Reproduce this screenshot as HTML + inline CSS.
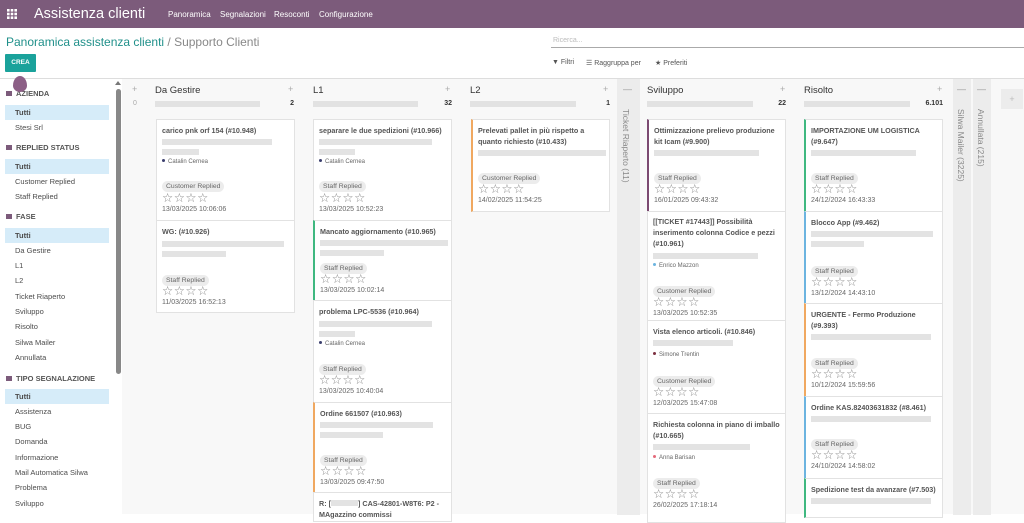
<!DOCTYPE html>
<html><head><meta charset="utf-8"><style>
*{margin:0;padding:0;box-sizing:border-box}
body{width:1024px;height:514px;overflow:hidden;font-family:"Liberation Sans",sans-serif;background:#fff;position:relative;color:#4c4c4c}
.nav{position:absolute;left:0;top:0;width:1024px;height:28px;background:#7c5b7b;color:#fff}
.nav .brand{position:absolute;left:34px;top:6px;font-size:14.5px}
.nav .m{position:absolute;top:10px;font-size:8px}
.bc{position:absolute;left:6px;top:35px;font-size:12px;color:#888}
.bc span{color:#20908a}
.crea{position:absolute;left:5px;top:54px;width:31px;height:18px;background:#1aa29b;color:#fff;font-size:6.5px;font-weight:bold;text-align:center;line-height:18px;border-radius:1px}
.drop{position:absolute;left:13px;top:76px;width:14px;height:16px;background:#8c5f86;border-radius:50% 50% 50% 50%/60% 60% 40% 40%}
.search{position:absolute;left:551px;top:47px;width:473px;border-bottom:1px solid #aaa;height:1px}
.sl{position:absolute;left:553px;top:37px;font-size:7px;color:#bbb}
.fb{position:absolute;top:59px;font-size:7px;color:#555}
.main{position:absolute;left:0;top:78px;width:1024px;height:436px;border-top:1px solid #ddd;background:#f8f8f8}
.side{position:absolute;left:0;top:0;width:122px;height:436px;background:#fff}
.side div{position:absolute;left:15px;font-size:7.5px;color:#4c4c4c;width:94px;height:15px;line-height:15px}
.side .h{left:6px;font-weight:bold;color:#555;font-size:7.5px}
.side .h:before{content:"";display:inline-block;width:6px;height:5px;background:#7c5b7b;margin-right:4px;vertical-align:0}
.side .a{background:#d6ecf9;font-weight:bold;left:5px;width:104px;padding-left:10px}
.sb{position:absolute;left:116px;top:10px;width:5px;height:285px;background:#888;border-radius:3px}
.sbt{position:absolute;left:115px;top:2px;width:0;height:0;border-left:3.5px solid transparent;border-right:3.5px solid transparent;border-bottom:4px solid #777}
.ct{position:absolute;font-size:9.5px;color:#333}
.cp{position:absolute;font-size:9px;color:#aaa}
.pb{position:absolute;height:6px;background:#e2e2e2}
.cn{position:absolute;font-size:7px;font-weight:bold;color:#333;text-align:right}
.fold{position:absolute;top:0;height:436px;background:#ececec}
.fold .v{position:absolute;top:30px;left:4px;writing-mode:vertical-rl;font-size:8.5px;color:#888;white-space:nowrap}
.fold .mi{position:absolute;top:5px;left:6px;font-size:9px;color:#999}
.c{position:absolute;background:#fff;border:1px solid #e2e2e2}
.c>*{position:absolute;left:5px}
.t{font-size:7.2px;font-weight:bold;color:#555;line-height:11px;white-space:nowrap}
.b{height:6px;background:#e3e3e3}
.p{font-size:6px;color:#666}
.p i{display:inline-block;width:3px;height:3px;border-radius:50%;background:#3b3f6e;margin-right:3px;vertical-align:1px}
.g{font-size:6.8px;color:#666;background:#ececec;border-radius:6px;padding:0 4px;height:11px;line-height:11px}
.s{font-size:12.5px;color:#888;letter-spacing:0.5px;line-height:11px}
.d{font-size:7px;color:#666}
</style></head><body>
<div class="nav">
<svg style="position:absolute;left:7px;top:9px" width="10" height="10"><g fill="#fff"><rect x="0" y="0" width="2.6" height="2.6"/><rect x="3.7" y="0" width="2.6" height="2.6"/><rect x="7.4" y="0" width="2.6" height="2.6"/><rect x="0" y="3.7" width="2.6" height="2.6"/><rect x="3.7" y="3.7" width="2.6" height="2.6"/><rect x="7.4" y="3.7" width="2.6" height="2.6"/><rect x="0" y="7.4" width="2.6" height="2.6"/><rect x="3.7" y="7.4" width="2.6" height="2.6"/><rect x="7.4" y="7.4" width="2.6" height="2.6"/></g></svg>
<div class="brand">Assistenza clienti</div>
<div class="m" style="left:168px">Panoramica</div>
<div class="m" style="left:220px">Segnalazioni</div>
<div class="m" style="left:274px">Resoconti</div>
<div class="m" style="left:319px">Configurazione</div>
</div>
<div class="bc"><span>Panoramica assistenza clienti</span> / Supporto Clienti</div>
<div class="crea">CREA</div>
<div class="sl">Ricerca...</div>
<div class="search"></div>
<div class="fb" style="left:552px">▼ Filtri</div>
<div class="fb" style="left:586px">☰ Raggruppa per</div>
<div class="fb" style="left:655px">★ Preferiti</div>
<div class="main">
<div class="side">
<div class="h" style="top:7px">AZIENDA</div>
<div class="a" style="top:26px">Tutti</div>
<div style="top:41px">Stesi Srl</div>
<div class="h" style="top:61px">REPLIED STATUS</div>
<div class="a" style="top:80px">Tutti</div>
<div style="top:95px">Customer Replied</div>
<div style="top:110px">Staff Replied</div>
<div class="h" style="top:130px">FASE</div>
<div class="a" style="top:149px">Tutti</div>
<div style="top:164px">Da Gestire</div>
<div style="top:179px">L1</div>
<div style="top:194px">L2</div>
<div style="top:210px">Ticket Riaperto</div>
<div style="top:225px">Sviluppo</div>
<div style="top:240px">Risolto</div>
<div style="top:256px">Silwa Mailer</div>
<div style="top:271px">Annullata</div>
<div class="h" style="top:292px">TIPO SEGNALAZIONE</div>
<div class="a" style="top:310px">Tutti</div>
<div style="top:325px">Assistenza</div>
<div style="top:340px">BUG</div>
<div style="top:355px">Domanda</div>
<div style="top:371px">Informazione</div>
<div style="top:386px">Mail Automatica Silwa</div>
<div style="top:401px">Problema</div>
<div style="top:417px">Sviluppo</div>
</div>
<div class="sbt"></div><div class="sb"></div>

<div class="cp" style="left:132px;top:5px">+</div><div class="cp" style="left:133px;top:21px;font-size:7px">0</div>

<div class="ct" style="left:155px;top:6px">Da Gestire</div><div class="cp" style="left:288px;top:5px">+</div>
<div class="pb" style="left:155px;top:22px;width:105px"></div><div class="cn" style="left:270px;top:21px;width:24px">2</div>

<div class="ct" style="left:313px;top:6px">L1</div><div class="cp" style="left:445px;top:5px">+</div>
<div class="pb" style="left:313px;top:22px;width:105px"></div><div class="cn" style="left:428px;top:21px;width:24px">32</div>

<div class="ct" style="left:470px;top:6px">L2</div><div class="cp" style="left:603px;top:5px">+</div>
<div class="pb" style="left:470px;top:22px;width:106px"></div><div class="cn" style="left:586px;top:21px;width:24px">1</div>

<div class="fold" style="left:617px;width:23px"><div class="mi">—</div><div class="v">Ticket Riaperto (11)</div></div>

<div class="ct" style="left:647px;top:6px">Sviluppo</div><div class="cp" style="left:780px;top:5px">+</div>
<div class="pb" style="left:647px;top:22px;width:106px"></div><div class="cn" style="left:762px;top:21px;width:24px">22</div>

<div class="ct" style="left:804px;top:6px">Risolto</div><div class="cp" style="left:937px;top:5px">+</div>
<div class="pb" style="left:804px;top:22px;width:106px"></div><div class="cn" style="left:910px;top:21px;width:33px">6.101</div>

<div class="fold" style="left:953px;width:18px"><div class="mi" style="left:4px">—</div><div class="v" style="left:3px">Silwa Mailer (3225)</div></div>
<div class="fold" style="left:973px;width:18px"><div class="mi" style="left:4px">—</div><div class="v" style="left:3px">Annullata (215)</div></div>
<div style="position:absolute;left:1001px;top:10px;width:22px;height:20px;background:#ececec;color:#bbb;font-size:9px;text-align:center;line-height:20px">+</div>
</div>

<div class="c" style="left:156px;top:119px;width:139px;height:102px">
<div class="t" style="top:5px">carico pnk orf 154 (#10.948)</div>
<div class="b" style="top:19px;width:110px"></div><div class="b" style="top:29px;width:37px"></div>
<div class="p" style="top:39px"><i></i>Catalin Cernea</div>
<div class="g" style="top:61px">Customer Replied</div>
<div class="s" style="top:73px">☆☆☆☆</div>
<div class="d" style="top:86px">13/03/2025 10:06:06</div></div>
<div class="c" style="left:156px;top:220px;width:139px;height:93px">
<div class="t" style="top:5px">WG: (#10.926)</div>
<div class="b" style="top:20px;width:122px"></div><div class="b" style="top:30px;width:64px"></div>
<div class="g" style="top:54px">Staff Replied</div>
<div class="s" style="top:65px">☆☆☆☆</div>
<div class="d" style="top:78px">11/03/2025 16:52:13</div></div>

<div class="c" style="left:313px;top:119px;width:139px;height:102px">
<div class="t" style="top:5px">separare le due spedizioni (#10.966)</div>
<div class="b" style="top:19px;width:113px"></div><div class="b" style="top:29px;width:36px"></div>
<div class="p" style="top:39px"><i></i>Catalin Cernea</div>
<div class="g" style="top:61px">Staff Replied</div>
<div class="s" style="top:73px">☆☆☆☆</div>
<div class="d" style="top:86px">13/03/2025 10:52:23</div></div>
<div class="c" style="left:313px;top:220px;width:139px;height:81px;border-left:2px solid #3fb880">
<div class="t" style="top:5px">Mancato aggiornamento (#10.965)</div>
<div class="b" style="top:19px;width:128px"></div><div class="b" style="top:29px;width:64px"></div>
<div class="g" style="top:42px">Staff Replied</div>
<div class="s" style="top:53px">☆☆☆☆</div>
<div class="d" style="top:66px">13/03/2025 10:02:14</div></div>
<div class="c" style="left:313px;top:300px;width:139px;height:103px">
<div class="t" style="top:5px">problema LPC-5536 (#10.964)</div>
<div class="b" style="top:20px;width:113px"></div><div class="b" style="top:30px;width:36px"></div>
<div class="p" style="top:40px"><i></i>Catalin Cernea</div>
<div class="g" style="top:63px">Staff Replied</div>
<div class="s" style="top:74px">☆☆☆☆</div>
<div class="d" style="top:87px">13/03/2025 10:40:04</div></div>
<div class="c" style="left:313px;top:402px;width:139px;height:91px;border-left:2px solid #f0a860">
<div class="t" style="top:5px">Ordine 661507 (#10.963)</div>
<div class="b" style="top:19px;width:113px"></div><div class="b" style="top:29px;width:63px"></div>
<div class="g" style="top:52px">Staff Replied</div>
<div class="s" style="top:63px">☆☆☆☆</div>
<div class="d" style="top:76px">13/03/2025 09:47:50</div></div>
<div class="c" style="left:313px;top:492px;width:139px;height:30px">
<div class="t" style="top:5px">R: [<span style="display:inline-block;width:27px;height:6px;background:#e3e3e3"></span>] CAS-42801-W8T6: P2 -</div>
<div class="t" style="top:16px">MAgazzino commissi</div></div>

<div class="c" style="left:471px;top:119px;width:139px;height:93px;border-left:2px solid #f0a860">
<div class="t" style="top:5px">Prelevati pallet in più rispetto a</div>
<div class="t" style="top:16px">quanto richiesto (#10.433)</div>
<div class="b" style="top:30px;width:128px"></div>
<div class="g" style="top:53px">Customer Replied</div>
<div class="s" style="top:64px">☆☆☆☆</div>
<div class="d" style="top:77px">14/02/2025 11:54:25</div></div>

<div class="c" style="left:647px;top:119px;width:139px;height:93px;border-left:2px solid #7c4a72">
<div class="t" style="top:5px">Ottimizzazione prelievo produzione</div>
<div class="t" style="top:16px">kit Icam (#9.900)</div>
<div class="b" style="top:30px;width:105px"></div>
<div class="g" style="top:53px">Staff Replied</div>
<div class="s" style="top:64px">☆☆☆☆</div>
<div class="d" style="top:77px">16/01/2025 09:43:32</div></div>
<div class="c" style="left:647px;top:211px;width:139px;height:110px">
<div class="t" style="top:4px">[[TICKET #17443]] Possibilità</div>
<div class="t" style="top:15px">inserimento colonna Codice e pezzi</div>
<div class="t" style="top:26px">(#10.961)</div>
<div class="b" style="top:41px;width:105px"></div>
<div class="p" style="top:51px"><i style="background:#6cb4e0"></i>Enrico Mazzon</div>
<div class="g" style="top:74px">Customer Replied</div>
<div class="s" style="top:85px">☆☆☆☆</div>
<div class="d" style="top:98px">13/03/2025 10:52:35</div></div>
<div class="c" style="left:647px;top:320px;width:139px;height:94px">
<div class="t" style="top:5px">Vista elenco articoli. (#10.846)</div>
<div class="b" style="top:19px;width:80px"></div>
<div class="p" style="top:31px"><i style="background:#7c3040"></i>Simone Trentin</div>
<div class="g" style="top:55px">Customer Replied</div>
<div class="s" style="top:66px">☆☆☆☆</div>
<div class="d" style="top:79px">12/03/2025 15:47:08</div></div>
<div class="c" style="left:647px;top:413px;width:139px;height:110px">
<div class="t" style="top:5px">Richiesta colonna in piano di imballo</div>
<div class="t" style="top:16px">(#10.665)</div>
<div class="b" style="top:30px;width:97px"></div>
<div class="p" style="top:41px"><i style="background:#e46a7a"></i>Anna Barisan</div>
<div class="g" style="top:64px">Staff Replied</div>
<div class="s" style="top:75px">☆☆☆☆</div>
<div class="d" style="top:88px">26/02/2025 17:18:14</div></div>

<div class="c" style="left:804px;top:119px;width:139px;height:93px;border-left:2px solid #3fb880">
<div class="t" style="top:5px">IMPORTAZIONE UM LOGISTICA</div>
<div class="t" style="top:16px">(#9.647)</div>
<div class="b" style="top:30px;width:105px"></div>
<div class="g" style="top:53px">Staff Replied</div>
<div class="s" style="top:64px">☆☆☆☆</div>
<div class="d" style="top:77px">24/12/2024 16:43:33</div></div>
<div class="c" style="left:804px;top:211px;width:139px;height:93px;border-left:2px solid #6cb4e0">
<div class="t" style="top:5px">Blocco App (#9.462)</div>
<div class="b" style="top:19px;width:122px"></div><div class="b" style="top:29px;width:53px"></div>
<div class="g" style="top:54px">Staff Replied</div>
<div class="s" style="top:65px">☆☆☆☆</div>
<div class="d" style="top:78px">13/12/2024 14:43:10</div></div>
<div class="c" style="left:804px;top:303px;width:139px;height:94px;border-left:2px solid #f0a860">
<div class="t" style="top:5px">URGENTE - Fermo Produzione</div>
<div class="t" style="top:16px">(#9.393)</div>
<div class="b" style="top:30px;width:120px"></div>
<div class="g" style="top:54px">Staff Replied</div>
<div class="s" style="top:65px">☆☆☆☆</div>
<div class="d" style="top:78px">10/12/2024 15:59:56</div></div>
<div class="c" style="left:804px;top:396px;width:139px;height:83px;border-left:2px solid #6cb4e0">
<div class="t" style="top:5px">Ordine KAS.82403631832 (#8.461)</div>
<div class="b" style="top:19px;width:120px"></div>
<div class="g" style="top:42px">Staff Replied</div>
<div class="s" style="top:53px">☆☆☆☆</div>
<div class="d" style="top:66px">24/10/2024 14:58:02</div></div>
<div class="c" style="left:804px;top:478px;width:139px;height:40px;border-left:2px solid #3fb880">
<div class="t" style="top:5px">Spedizione test da avanzare (#7.503)</div>
<div class="b" style="top:19px;width:120px"></div></div>

<div class="drop"></div>
</body></html>
